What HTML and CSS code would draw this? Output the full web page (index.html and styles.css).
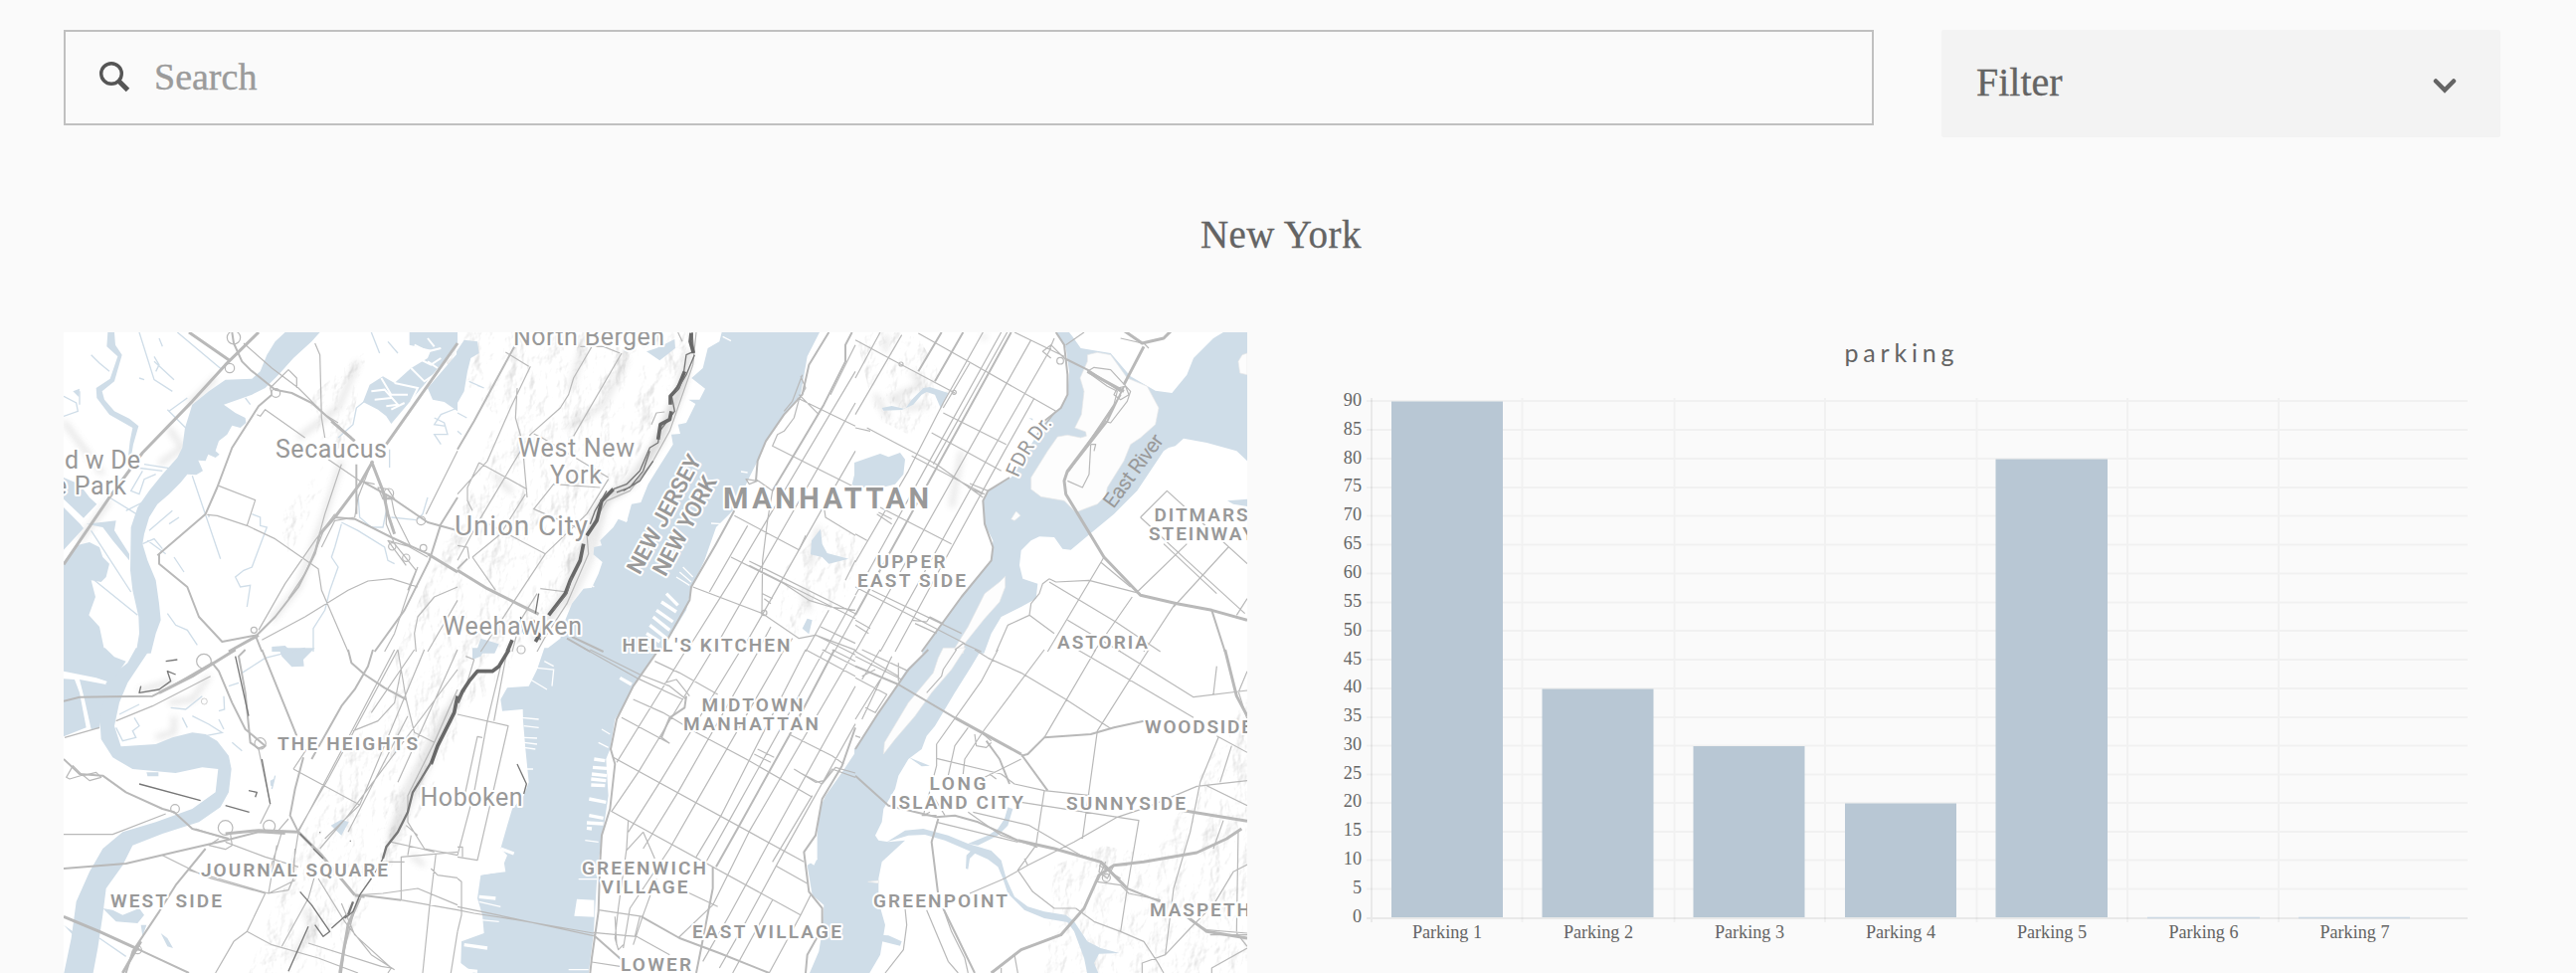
FILE: index.html
```html
<!DOCTYPE html>
<html lang="en">
<head>
<meta charset="utf-8">
<title>New York parking</title>
<link rel="stylesheet" href="styles.css">
</head>
<body>
<header class="toolbar">
  <label class="search">
    <svg class="search-icon" viewBox="0 0 36 36"><circle cx="14" cy="14" r="10.3"/><path class="handle" d="M21.5 21.5L30.5 30.5"/></svg>
    <input class="search-input" type="text" placeholder="Search">
  </label>
  <div class="filter"><span>Filter</span>
    <svg class="chevron" viewBox="0 0 24 16"><path d="M3 3.5L12 12.500L21 3.500"/></svg>
  </div>
</header>
<h1 class="city">New York</h1>
<main class="panels">
<svg class="map" viewBox="64 334 1190 644">
  <defs>
    <filter id="soft" x="-20%" y="-20%" width="140%" height="140%"><feGaussianBlur stdDeviation="9"/></filter>
    <filter id="relief" x="0" y="0" width="100%" height="100%" color-interpolation-filters="sRGB">
      <feTurbulence type="fractalNoise" baseFrequency="0.04 0.025" numOctaves="5" seed="8" result="n"/>
      <feColorMatrix in="n" type="matrix" values="0 0 0 0 0 0 0 0 0 0 0 0 0 0 0 1 0 0 0 0" result="h"/>
      <feDiffuseLighting in="h" surfaceScale="5" diffuseConstant="1.2" lighting-color="#fff" result="l"><feDistantLight azimuth="215" elevation="60"/></feDiffuseLighting>
      <feComposite in="l" in2="SourceAlpha" operator="in"/>
    </filter>
    <path id="fdr" d="M1023.500 480.500Q1036 449 1061 423"/>
  </defs>
  <rect class="land" x="64" y="334" width="1190" height="644"/>

  <g class="relief">
    <path d="M420 334H700L640 460L590 540L540 640L470 720L400 860L330 978H250L300 840L380 700L440 560L500 420Z"/>
    <path d="M310 400L370 350L350 440L280 520L290 560L330 480Z"/>
    <path d="M860 334H920L960 400L920 440L880 420ZM790 570L840 520L870 550L850 600L800 640L780 620Z"/>
    <path d="M1110 850L1160 860L1254 700V978H1050L1060 870Z"/>
  </g>

  <g class="shade" transform="translate(460 330) scale(.33333)">
    <path d="M510 90L440 230L330 300M380 50L340 190M560 430L600 340L690 140M470 500L540 460M110 440L165 495M330 840L400 700L450 520M1040 780L1060 850M1090 600L1060 720"/>
  </g>
  <g class="shade" transform="translate(60 330) scale(.33333)">
    <path d="M900 100L840 240L720 330M850 400L800 560L720 780L640 880M330 300L370 360L300 410M12 280L130 440M470 150L390 230M150 520L60 640"/>
  </g>
  <g class="shade" transform="translate(60 653) scale(.33333)">
    <path d="M450 80L400 150L330 160M345 200V250L290 265M240 125L340 95M740 780L760 840L700 930M1170 180L1040 430L1000 560M1100 650L1060 620"/>
  </g>
  <g class="shade" transform="translate(860 330) scale(.33333)">
    <path d="M95 20L90 70M170 130L200 170L110 210L160 240L220 230M390 20L385 35M320 370L290 540M60 200L100 270"/>
  </g>

  <!-- water -->
  <g class="water" transform="translate(60 330) scale(.33333)">
    <path d="M680 12L785 12L760 40L705 90L660 140L620 180L580 200L495 230L530 255L560 270L562 285L545 300L520 293L505 320L480 340L470 370L482 380L470 390L448 380L440 400L418 398L432 430L412 442L385 440L365 465L330 500L295 530L270 570L255 620L250 650L265 700L290 760L300 830L305 880L290 920L275 980H230L240 920L238 870L220 790L213 730L215 600L235 540L270 490L310 440L355 390L370 360L378 300L400 230L450 190L500 155L580 152L605 130L625 80L650 40Z"/>
    <path d="M12 705L50 655L90 645L120 660L130 690L150 710L140 750L125 765L95 760L108 810L88 865L120 900L137 980H12ZM12 540L62 590L72 603L12 668ZM12 450L60 470L90 510L112 530L72 572L12 515Z"/>
    <path d="M145 12H165L168 50L188 80L165 160L128 190L135 215L165 250L210 272L238 295L222 350L216 385H207L212 340L220 300L150 260L112 210L110 180L152 152L175 85L142 55ZM40 190L60 182L58 208Z"/>
    <path d="M1055 12H1200V50L1000 288L985 265L960 245L915 222L935 170L975 145L1010 165L1060 120L1110 90L1120 65L1055 50Z"/>
    <path d="M1200 75L1110 180L1125 215L1160 222L1200 250ZM640 960L680 957L700 975H640ZM80 590L170 580L165 610L210 680V700L160 640L130 600Z"/>
    <g class="line">
      <path d="M150 130L120 105L95 80M240 12L285 155L340 190M285 100L345 155M300 30L310 55M285 85L300 110L290 130M355 12L490 125M330 250L385 210M325 245L380 300M150 510L240 565M230 420L310 430M255 410L350 425M250 430L215 490L240 500L255 455L290 440M400 445L485 695M450 560L450 570M580 560L605 570V595L625 600L580 720L555 730L530 750L545 780L575 775L565 840M265 640L320 680M345 690L375 735M95 610L215 795M105 760L235 865M325 860L350 895L385 910L415 955M850 590L830 660L820 690L840 720L815 790L800 850L765 905V975M850 585L900 610L980 660L990 700L1010 710M900 500L905 570L940 600L975 600L985 550M1000 570L1075 578M1130 270L1160 285L1170 320L1130 320L1150 350M1200 240L1150 260L1130 290L1165 295M12 205L50 225L55 250L12 265M940 12L965 75M990 40L1020 75M240 150L255 155M60 190V230M560 210L575 230M250 650L285 635L310 665M1110 510L1095 560L1080 575M330 590L360 570M270 610L340 550M920 220L895 240L885 290L840 330M995 365V420M200 550L260 520"/>
    </g>
  </g>
  <g class="pond-lines" transform="translate(60 330) scale(.33333)">
    <path d="M940 190L980 185L1020 230L985 235M970 150L1000 200L1050 200M1010 165L1080 180L1060 220M1060 120L1100 160L1130 140M1080 90L1120 110L1150 90M1000 245L1040 225M1070 50L1110 70L1150 60M1110 100L1140 120M950 215L1000 210M1110 30L1130 55"/>
  </g>
  <g class="water" transform="translate(460 330) scale(.33333)">
    <path d="M797 12H1092L1055 85L1035 200L985 260L930 340L905 400L880 450L835 545L780 600L745 700L705 785L690 850L635 940L610 980H262L275 962L310 935L325 880L345 830L380 785L405 782L425 740L437 705L410 682L412 660L435 655L430 640L470 600L485 575L510 585L525 530L553 525L575 470L600 430L650 350L645 320L672 318L665 290L690 285L718 228L697 215L730 215L747 182L706 150L740 120L755 60L790 40Z"/>
    <path d="M-3 70L20 35L60 40L65 75L40 90L30 130L20 190L-3 230ZM570 70L600 60L655 33L657 60L610 97ZM70 935L125 952L112 980H55ZM1068 640L1095 605L1100 650L1115 678L1180 695L1120 710L1100 690L1065 682ZM1055 875L1070 880L1060 922L1040 905ZM1190 470L1200 430V480Z"/>
    <path d="M35 160L80 180L60 172M0 255L28 270M0 310L12 320" class="line"/>
  </g>
  <g class="water" transform="translate(860 330) scale(.33333)">
    <path d="M605 12L635 60L645 130L640 200L620 240L570 285L470 450L400 490L385 520L390 590L415 640L410 700L320 810L240 920L200 980H388L410 920L440 870L470 855L500 840L545 815L550 770L505 755L495 715L500 670L530 640L555 628L600 630L625 665L650 668L720 610L780 560L850 490L930 370L945 360L965 355L990 332L1060 345L1150 370L1182 400V12H1110L1080 30L1020 90L1000 140L955 195L905 188L830 145L770 75L680 60L655 25L645 12Z"/>
    <path d="M-3 405L40 390L75 378L100 388L135 375L150 395L145 440L120 470L80 480H-3ZM80 240L110 234L150 243L170 215L205 180L225 177L280 195L258 242L240 200L215 192L200 200L175 230L140 246L85 248ZM1122 520L1182 515V537L1140 530ZM523 270L535 272V278Z"/>
  </g>
  <g class="water" transform="translate(60 653) scale(.33333)">
    <path d="M230 -5H275L205 100L180 160L165 230L185 292L290 285L340 265L400 250L440 255L475 275L510 320L518 360L510 430L485 475L420 520L310 555L220 590L190 650L140 720L130 800L115 900L100 980H12L35 870L50 760L90 670L130 600L190 550L290 520L400 480L470 430L478 360L430 355L350 372L220 360L160 325L125 270L120 190L140 100L180 60L205 40Z"/>
    <path d="M12 -5H137L165 22L200 35L155 100L110 85L12 65ZM12 88L45 90L60 130L80 235L12 262ZM60 90L140 105L120 238L95 240L75 150ZM660 -5H770L735 30L737 50L700 52L670 20ZM818 530L850 512L872 520L850 560ZM262 370H298V382H265ZM635 395L645 390V412L636 410ZM130 780L160 785L190 800L240 780L255 800L235 825L170 820L150 800ZM245 830H262L250 865ZM305 855L325 870L342 900L325 895ZM12 830L40 850V860Z"/>
    <path class="line" d="M170 235L190 275L230 265L220 245L240 230L225 205M335 175L380 180L430 140M370 205L385 235M400 200L450 225L490 250L440 260M480 210L495 240M480 185L497 180L495 140M510 110L540 100M550 70L620 25L740 -5M520 280L550 305M180 195L240 165M120 870L200 925M650 380L640 420"/>
  </g>
  <g class="water" transform="translate(460 653) scale(.33333)">
    <path d="M610 -5L590 20L530 110L500 170L475 210L460 300L448 330L455 440L440 540L425 640L420 700L410 860L395 980H55L10 945L12 880L80 855L75 800L60 750L70 680L130 670L150 620L130 600L150 530L165 480L200 440L215 400L205 300L200 240L195 180L135 185L130 150L150 115L215 110L240 60L262 -5Z"/>
    <path d="M1203 305L1160 370L1110 440L1092 480L1085 560L1085 630L1055 650L1070 740L1105 770L1100 850L1090 910L1060 980H1203ZM45 -5H85L70 20L45 30Z"/>
  </g>
  <g class="water" transform="translate(860 653) scale(.33333)">
    <path d="M225 -5L155 60L70 190L-3 300V980H40L75 920L90 830L70 760V690L80 640L150 575L100 580L70 575L60 560L80 520L85 480L120 420L130 380L160 330L200 300L215 260L240 230L300 130L350 50L383 -5Z"/>
    <path d="M95 580L150 545L205 540L280 560L340 585L410 606L440 635L455 690L480 745L520 775L570 790L635 800L660 820L700 880L740 900L797 915L735 917L720 945L735 980H700L690 930L660 850L640 822L570 810L510 785L460 735L445 690L430 655L400 632L340 605L270 575L210 558L160 560ZM340 585L400 560L430 540L450 510L460 475L475 480L460 530L430 560L370 590ZM162 325L225 350L200 352ZM333 660L335 620L355 600L370 605L345 630L340 662ZM75 860L100 862L140 880L135 893L75 878Z"/>
  </g>

  <!-- islands and piers -->
  <g class="land-shape" transform="translate(860 330) scale(.33333)">
    <path d="M700 80L730 73L770 80L820 150L880 175L915 240L905 290L860 330L830 350L810 400L760 480L755 505L730 530L690 545L665 555L630 520L560 508L530 485L530 450L580 370L610 327L640 322L680 330L697 325L695 312L662 300L682 260L690 190L678 150L700 100Z"/>
    <path d="M452 748V780L435 825L390 875L330 950L325 980H290L340 900L390 800L435 765ZM470 575L485 552L498 565L480 580ZM1182 75L1167 80L1155 100L1160 135L1182 140Z"/>
  </g>
  <g class="land-shape" transform="translate(860 653) scale(.33333)"><path d="M265 -5H332L290 60L230 130L180 200L120 270L85 315L88 280L160 160L235 70L250 25ZM38 700L70 696V704Z"/></g>
  <g class="piers" transform="translate(460 330) scale(.33333)">
    <path class="wide" d="M630 800L665 835M615 825L660 855M600 850L650 885M590 870L640 910M580 895L630 935M570 920L610 945M560 945L600 965"/>
    <path d="M680 720L710 750M670 735L705 765M660 750L700 775M765 588L800 590M855 432L875 435M800 25L825 38M490 565L512 580M405 775L412 780"/>
  </g>
  <g class="piers" transform="translate(460 653) scale(.33333)">
    <path class="wide" d="M490 85L525 105M412 330L445 335M408 355L450 358M405 375L450 380M403 390L448 395M403 408L445 410M397 450L448 460M397 500L440 508M390 522L440 525M390 538L405 540M130 600L170 615M65 745L115 750M20 890L90 900M10 965L60 970"/>
    <path d="M425 280L455 295M435 240L460 255M365 692H420M335 965H395M195 180V205L245 210M200 230L245 235M200 265L240 267M200 280L240 285M200 295L235 300M210 360H228M65 760L130 775M70 815L125 820M1055 630L1085 632M385 575L425 580M240 55L290 60L285 110M220 90L270 120M262 35L290 50"/>
    <path class="block" d="M360 752L412 755V806L352 803ZM60 655L140 640L145 670L60 680ZM1055 625L1085 630L1075 650L1060 640Z"/>
  </g>

  <!-- roads: New Jersey north -->
  <g class="roads" transform="translate(60 330) scale(.33333)">
    <path class="major" d="M12 712L150 510L250 375L400 220L500 110L600 12M390 12L510 95M820 280L890 340M945 400L905 470L830 570L785 620M940 400L975 490L990 560L1010 620M1110 680L1200 735M1200 45L985 350M600 925L510 975"/>
    <path class="mid" d="M520 12L525 45L550 100L575 125L650 185L700 195L760 225L800 260L880 330M640 200L600 235L520 360L475 480L440 560L295 685M785 620L770 680L720 780L650 870L595 925L490 945L420 870L385 780L300 710V680M895 410V560M910 460L1000 510L1110 585L1200 610M830 570L890 575L1000 630L1110 680M1200 510L1150 590L1115 700L1040 850L950 975M590 925L610 975"/>
    <path d="M555 45L640 120L720 180L800 260L840 285M770 45L785 80L790 270L800 330M595 260L605 265L620 245L740 330M810 395L905 460L950 470M480 475L590 518L565 595L475 565L445 562M565 595L650 635L780 725L790 790L870 975M600 910L680 770L770 640L830 560M610 940L740 870L870 790L930 762L1000 755L1080 780M1200 370L1105 560M850 410L800 560L770 670L740 740L690 815M640 200L635 180L690 125L715 150V180M1080 720L1050 800L1010 920L980 975M1200 780L1130 810L1080 870L1070 920L1075 975M1200 820L1110 975M935 420L900 510L890 570L830 580L790 660M985 500V590L1010 650L1075 730L1050 790M1000 510L1010 560L1060 660L990 640L1045 715M800 600L760 700M1020 640L1110 690M960 480L990 485L1010 515L975 515Z"/>
    <circle cx="513" cy="120" r="14"/><circle cx="525" cy="28" r="20"/><circle cx="652" cy="195" r="13"/><circle cx="586" cy="910" r="9"/><circle cx="1090" cy="580" r="13"/><circle cx="1003" cy="658" r="11"/><circle cx="1045" cy="692" r="11"/><circle cx="1097" cy="662" r="10"/><circle cx="993" cy="497" r="14"/>
  </g>
  <g class="roads" transform="translate(460 330) scale(.33333)">
    <path class="major" d="M0 730L90 785L190 835L245 862"/>
    <path class="mid" d="M195 12L120 150L50 280L0 365M0 725L30 695M1120 12L1060 110L1040 200L985 260L930 340L905 400L900 460M835 550L780 650L705 780L700 820L635 935L610 975M345 930L440 975M330 935L400 975M1190 12L1170 50V100L1105 230L1040 340L950 490"/>
    <path d="M145 72L215 115M490 75L440 55L370 55M405 55L350 150L335 200L310 240L220 320L65 580L0 700M495 75L350 325M230 318L255 330L455 450M65 405L210 485M65 405L30 480L30 520L45 550M220 115L160 240L90 400L0 500M455 455L390 560L265 680L70 975M430 480L290 470L230 545L380 610M205 500L130 620L45 690M180 180L175 270L195 340L210 510M265 680L95 590M45 690L115 790M0 655L30 660L35 695M665 12L678 40M720 12L710 110L640 310L590 400L520 490L450 520L390 620L395 680L330 830L265 930L240 975M585 290L600 255L625 252M240 800L190 880L165 975M250 785L330 795M1025 210L1200 295M1030 200L1090 260M1035 145L1050 180L1030 215L1015 270L985 310L965 320L950 355L1090 425L1200 480M985 250L1010 220L1040 140M835 565L1030 668L1050 625M825 690L985 770L1060 820L1125 840L1200 850M880 702L1200 860M880 715L1200 875M710 780L920 860L1030 935L1080 925L1200 970M900 455L950 490L935 580L920 700L918 860M1105 535L1110 570L1200 625M920 800L950 815M925 815L945 830M1095 900L1200 950M1080 925L1200 985M870 455L905 460L880 470Z"/>
    <circle cx="925" cy="858" r="8"/>
  </g>

  <!-- Manhattan street grid -->
  <g class="roads" transform="translate(460 330) scale(.33333)">
    <path d="M1200 130L950 550L825 760L690 975M875 595L760 795M1200 225L985 600L770 975M1200 370L1105 535L910 880L855 975M945 900L905 975M1010 935L985 975M1200 700L1170 760M1120 850L1050 975M1200 808L1107 975M1200 862L1137 975M1200 50L1125 200"/>
  </g>
  <g class="roads" transform="translate(460 653) scale(.33333)">
    <path class="mid" d="M610 -5L530 110L480 210L462 300L475 345L460 480L435 560L430 640L425 790L405 930L400 975M1137 0L1000 260L850 530L780 655M770 655V720L735 900L720 975M1200 235L1160 350L1100 450L1080 560L1045 610L1060 730L1100 780L1100 840L1055 920L1050 975M555 805L670 870L790 915L940 975M410 860L495 935M690 140L685 175L640 205L615 265"/>
    <path d="M690 0L480 340M770 0L545 370L465 487M855 0L610 400L515 550M910 0L665 430L560 600M985 0L720 460L640 600L520 780L500 900M1050 0L795 500L720 625M600 690L560 800L530 890M1107 0L820 515L750 640M1200 0L880 548L770 770L665 870M1200 110L940 580L820 800L740 940M1200 224L985 608L870 820L790 960M560 550L510 605M1070 440L950 640M950 755L830 975M595 35L670 70L785 135M530 150L620 190L720 250L880 335L1070 445M495 205L640 283M470 325L1045 640M463 487L1035 800M690 730L785 775M960 652L1055 705M425 785L560 805M410 853L540 865L640 920M405 942L490 955M1000 255L1130 320L1165 345M905 300L955 325M895 315L945 340M1015 360L1080 400L1105 395L1130 360L1200 385M1030 370L1100 405L1140 355L1200 372M1035 800L1065 740M550 805L535 865M560 550L595 630M515 515L510 600L485 780L475 870L485 905L500 890M475 805L480 890M640 283L610 260M625 100L660 90L700 140M400 0L550 75L640 110L690 150M380 -5L540 85L680 150M1050 0L1200 80M1100 0L1200 50M1130 0L1200 35M0 785L50 795L180 815L410 855M0 775L120 800L410 863M940 975L1035 800"/>
  </g>
  <g class="roads" transform="translate(860 330) scale(.33333)">
    <path class="mid" d="M260 12L190 130M325 12L240 160M470 12L0 865M605 12L630 50L640 140V200L620 240L570 280M465 450L400 490L385 520L390 590L415 660L410 700L320 810L200 975M630 90L700 125L800 190"/>
    <path d="M0 35L130 105L300 195M190 15L350 105L605 250M385 12L265 225L160 430L0 705M458 12L235 410M440 12L210 425L0 805M530 35L0 975M590 60L400 390L75 975M540 210L450 370L280 680L120 975M605 250L540 330M345 105L265 240M265 255L455 350M230 315L440 430M35 300L130 350L245 410L385 510M170 385L390 500M345 468L400 490M340 480L385 500M0 300L45 310M65 560L110 590M0 620L35 640M75 540L290 650M0 780L330 950M50 790L320 920M170 880L215 885L225 870L265 890M180 890L245 920M300 970L325 950L380 975M0 880L45 905M0 895L40 920M480 12L630 85M590 90L565 70L590 50L630 90M635 50L690 12M600 30L585 65M70 555L110 575M140 20L0 260M75 12L0 150"/>
    <circle cx="298" cy="193" r="6"/><circle cx="138" cy="108" r="6"/><circle cx="618" cy="98" r="10"/>
    <path class="major" d="M800 0L865 45L930 30L960 0M870 55L810 170M750 285L640 430L630 460L635 500L750 690L860 805L970 830L1075 850L1182 880M700 130L810 190"/>
    <path class="mid" d="M810 175L760 280L635 440M800 200L745 290M1075 850L1115 975"/>
    <path d="M700 130L720 118L770 125L830 190L820 220L770 285L750 280M705 135L760 175L790 190L780 230L645 430M710 350L705 440L685 480L640 460M710 350L725 350L720 370M790 180L815 175L825 200L800 215L780 200ZM865 45L800 30M885 60L870 45M750 690L580 975M585 755L605 765L705 760L860 800M585 755L565 770L555 800L530 830L525 865L600 920M525 865L460 895L425 975M585 765L785 885L920 975M740 705L830 780M850 795L1000 650M860 570L940 490L1182 710M860 570L1000 700L1175 860M835 810L720 975M965 830L870 975M1125 660L960 840M640 880L800 975M930 650L1090 800M1182 815L1150 865"/>
  </g>

  <!-- Queens and Brooklyn -->
  <g class="roads" transform="translate(860 653) scale(.33333)">
    <path class="major" d="M300 205L500 315M990 485L1182 517M490 575L600 600L740 640L800 700L820 720M1165 540L1120 570L1030 612L870 640L780 650L735 680L690 780L620 860L500 905L410 975M1000 805L1060 850L1182 870M1182 200L1150 140L1115 0"/>
    <path class="mid" d="M0 50L130 105L300 205M0 300L70 190L160 60L220 0M0 380L100 470L245 505L300 500L370 520L490 575M250 510L230 580L250 740M265 780L360 975M500 315L580 425M820 720L920 760M500 320L520 315L570 265L710 255L780 235L870 215M395 275L435 330L465 405"/>
    <path d="M360 0L400 25L500 70L635 150L770 238M670 0L800 75L1020 205M790 0L1020 143L1182 123M570 0L390 240L330 330L325 375M725 0L570 265M885 0L730 245L685 570M430 0L380 95L245 285V350L205 500M340 235L300 290L280 380M245 328L440 375L480 405L570 425L710 440M390 385L500 330M500 460L855 515L820 720L800 850M570 425L545 590L490 665L535 730L600 780L665 780M345 735L450 690L520 650L660 580L790 505L880 475L1030 412L1182 395M355 490L525 530L680 620L745 640M245 520L490 580M340 490L440 560L550 595M110 20L20 210M1095 265L1040 400L1010 550L960 720L935 920L865 945L865 975M935 920L1010 840L1080 770L1140 670L1182 648M1090 260L1182 310M1135 290L1100 400M1110 515L1080 600M1155 545L1150 850M1060 410L1182 470M480 920L490 975M150 780L155 830L145 905L90 975M215 785L280 940L310 975M730 700L800 710L825 735L920 755M740 640L735 670L760 690L780 650M665 780L720 820L800 850L870 880L910 940L930 975M265 780L290 850L330 930L340 975M1182 855L1060 845L1010 815M1182 860L1070 860M1182 900L1075 960V975M1150 855L1182 895M1090 50L1080 135M1155 125L1182 210M1182 65L1155 130M360 255L365 290L395 295L410 280M380 250L410 275M405 375L425 390M245 500L200 500M270 500L240 450M225 490L205 500M0 20L140 90M20 0L160 65M0 85L95 135L60 190L30 175M0 5L130 80M75 0L20 90M60 60L20 80M130 40V95M105 30L90 65M0 210L75 90M0 260L15 265M215 130L260 80L265 60L305 0M510 630L520 650M440 960V975"/>
    <path d="M745 640L815 715M735 650L800 690M755 640L730 700M780 650L820 650"/><circle cx="757" cy="688" r="12"/>
  </g>

  <!-- New Jersey south -->
  <g class="roads" transform="translate(60 653) scale(.33333)">
    <path class="major" d="M300 130L400 80L530 0M500 555L600 545L720 550L790 620L890 740M890 740L920 745M905 750L870 830L845 975M245 880L190 975M12 805L120 850L240 905"/>
    <path class="mid" d="M12 155L60 143L150 142L280 140L340 110L460 40L480 65L520 160L560 240L620 290L600 298L575 280L560 130L540 20L560 0M12 330L60 375L130 380L200 430L310 480L345 490L400 540L510 570M12 660L200 645L350 610L500 575L600 550L680 555M440 600L350 710L300 790L220 910L200 975M610 0L715 260M735 325L710 420L695 500L720 550M945 0L930 50L890 120L850 170L760 330M870 0L880 40L920 75L980 115L1045 150M910 740L1030 755M240 905L390 975"/>
    <path d="M15 265L120 235M170 215L280 170L455 80M705 360L905 468M705 360L745 300M720 550L905 200L1010 0M720 545L810 390L1020 0M800 570L905 468L1100 0M870 550L1050 200M1070 0L940 190M785 600L870 500L1200 60M1020 0L1045 150L1070 250L1130 280M1200 0L1020 400M1200 120L1130 280L1050 440L1050 520L1100 600L1200 620M885 245L960 215L1010 160L1030 60M12 557H160L320 495M500 580L620 625L720 655M390 665L630 735L710 695M310 620L440 685L620 735L565 850L525 880L470 975M565 850L640 890L780 930L900 975M670 895L750 750L770 680M655 590L630 735L690 725L705 690L710 600M670 550L655 600L635 660M900 740L975 735L1080 720L1200 770M1030 755V625L1200 610M1030 755L1200 785M1135 615L1115 780L1095 975M850 765L890 860L1000 960L990 975M780 690L860 820L940 920L1010 965M750 885L970 955L1000 960M1200 850L1180 975M910 745L890 780L860 900L850 975M720 550L700 680M600 300L635 465L605 525M1000 580L1090 600L1130 610M1045 530L1080 560M1060 560L1050 620M1120 660L1140 680L1200 688M690 510L660 545M970 640L1040 640M410 540L500 570"/>
    <circle cx="435" cy="35" r="22"/><circle cx="500" cy="537" r="22"/><circle cx="348" cy="480" r="13"/><circle cx="632" cy="532" r="18"/><circle cx="605" cy="283" r="17"/><circle cx="235" cy="905" r="12"/><path d="M20 385L40 350L70 380L110 370L125 385L90 395L70 378L30 390ZM515 555L520 590L500 602L450 590L480 570"/>
  </g>
  <g class="roads" transform="translate(460 653) scale(.33333)">
    <path d="M150 0L110 215M130 50L90 215M0 195L153 230L60 635L0 625M75 265L60 262L15 470M90 215L50 430L0 620M0 690L12 700V800L0 850M0 595H15V625M25 20L50 30L20 130"/><circle cx="192" cy="0" r="12"/>
  </g>

  <!-- cliffs -->
  <g class="cliff" transform="translate(460 330) scale(.33333)">
    <path class="haze" d="M700 70L670 190L610 340L510 475L430 530L375 680L320 810L230 940"/>
    <path class="fine" d="M708 12L712 70L690 80L680 150L645 200L655 250L610 310L605 345L580 360L550 430L510 470L470 485"/>
    <path d="M705 14L702 40L712 75M685 130L665 180L642 205V230M645 250L640 275L612 290L605 335M470 485L435 520L420 580L390 625M380 650L370 700L340 760L325 800L275 865M250 920L235 945M165 940L150 975" class="bold"/>
    <path class="fine" d="M580 370L560 430L520 480L480 495M345 750L330 800L290 850M245 800L235 860M660 190L690 140L715 80M590 400L550 460L500 490M450 490L415 550L400 590M190 870L200 920L230 880L250 940"/>
  </g>
  <g class="cliff" transform="translate(460 653) scale(.33333)"><path class="bold" d="M155 0L125 50L105 65L60 65L35 95L15 125L0 160"/><path class="fine" d="M180 345L208 405L200 435"/></g>
  <g class="cliff" transform="translate(60 653) scale(.33333)">
    <path class="haze" d="M1200 140L1080 400L1000 580"/>
    <path class="bold" d="M1200 140L1190 190L1160 250L1140 290L1120 345"/>
    <path class="medium" d="M1120 340L1090 390L1065 430L1050 490L1020 550L985 595L975 630M885 760L870 800"/>
    <path class="fine" d="M975 630L940 690L905 740L885 790L860 810M725 730L760 770L815 850L795 865L770 830M865 800L820 840M750 835L690 970M530 20L570 200M610 330L635 465M500 470L572 490M240 405L425 455M320 35L355 30M245 110L240 130L300 120L335 95L325 65L350 75M570 425L595 430L590 445M725 555L760 590M765 600L795 630M785 550V553M877 575V578"/>
    <circle cx="436" cy="156" r="9"/>
  </g>

  <!-- labels -->
  <g class="town">
    <text x="65" y="471" textLength="76">d w De</text><text x="54" y="496.700" textLength="73">e Park</text>
    <text x="277" y="460" textLength="112">Secaucus</text><text x="516" y="346.700" textLength="152">North Bergen</text>
    <text x="521" y="459.300" textLength="117">West New</text><text x="553" y="485.700" textLength="52">York</text>
    <text class="bigger" x="457" y="538.300" textLength="134">Union City</text><text x="445" y="637.700" textLength="140">Weehawken</text>
    <text x="422.500" y="809.700" textLength="103">Hoboken</text>
    <text class="river" transform="translate(1119.500 512) rotate(-53.500)" textLength="86">East River</text>
    <text class="street"><textPath href="#fdr">FDR Dr.</textPath></text>
  </g>
  <g class="area">
    <text class="state" transform="translate(643 578.500) rotate(-61.600)" textLength="132">NEW JERSEY</text>
    <text class="state" transform="translate(669 580.500) rotate(-61.600)" textLength="110">NEW YORK</text>
    <text class="borough" x="727" y="511" textLength="207">MANHATTAN</text>
    <text x="625.500" y="655" textLength="169">HELL'S KITCHEN</text>
    <text x="881.500" y="570.700" textLength="69">UPPER</text><text x="862" y="590" textLength="109">EAST SIDE</text>
    <text x="1160.500" y="524" textLength="94">DITMARS</text><text x="1155" y="543.300" textLength="106">STEINWAY</text>
    <text x="1063" y="651.700" textLength="91">ASTORIA</text><text x="279" y="754" textLength="141">THE HEIGHTS</text>
    <text x="202" y="881" textLength="188">JOURNAL SQUARE</text><text x="111" y="912" textLength="112">WEST SIDE</text>
    <text x="705.500" y="715.300" textLength="102">MIDTOWN</text><text x="687" y="734" textLength="136">MANHATTAN</text>
    <text x="585" y="879" textLength="125">GREENWICH</text><text x="604.500" y="898" textLength="87">VILLAGE</text>
    <text x="696" y="942.700" textLength="150">EAST VILLAGE</text><text x="624" y="976.300" textLength="71">LOWER</text>
    <text x="934.500" y="794.300" textLength="57">LONG</text><text x="896" y="813.300" textLength="133">ISLAND CITY</text>
    <text x="1072" y="814.300" textLength="120">SUNNYSIDE</text><text x="1151" y="736.700" textLength="108">WOODSIDE</text>
    <text x="878" y="912" textLength="135">GREENPOINT</text><text x="1156" y="921" textLength="101">MASPETH</text>
  </g>
</svg>

<svg class="chart" viewBox="1320 334 1200 644">
  <text class="chart-title" x="1854.500" y="363.500" textLength="110">parking</text>
  <path class="grid" d="M1374 403H2481M1374 432H2481M1374 461H2481M1374 490H2481M1374 518.500H2481M1374 547.500H2481M1374 576.500H2481M1374 605.500H2481M1374 634H2481M1374 663H2481M1374 692H2481M1374 721H2481M1374 749.500H2481M1374 778.500H2481M1374 807H2481M1374 836H2481M1374 864.500H2481M1374 893.500H2481M1530.500 400V927M1683.500 400V927M1835 400V927M1987.500 400V927M2139 400V927M2291 400V927"/>
  <path class="axis" d="M1374 923H2481M1379 400V927"/>
  <g class="bars">
    <rect x="1399" y="403.500" width="112" height="518.500"/><rect x="1550.500" y="692.500" width="112" height="229.500"/>
    <rect x="1702.500" y="750" width="112" height="172"/><rect x="1855" y="807.500" width="112" height="114.500"/>
    <rect x="2006.500" y="461.500" width="112.500" height="460.500"/>
  </g>
  <path class="empty-bar" d="M2159 922.500H2272M2311 922.500H2423"/>
  <g class="y-labels">
    <text x="1369" y="407.700">90</text><text x="1369" y="436.600">85</text><text x="1369" y="465.500">80</text><text x="1369" y="494.400">75</text><text x="1369" y="523.300">70</text><text x="1369" y="552">65</text><text x="1369" y="581">60</text><text x="1369" y="610">55</text><text x="1369" y="638.800">50</text><text x="1369" y="667.700">45</text><text x="1369" y="695.500">40</text><text x="1369" y="724.500">35</text><text x="1369" y="753.500">30</text><text x="1369" y="782.500">25</text><text x="1369" y="811">20</text><text x="1369" y="840">15</text><text x="1369" y="869">10</text><text x="1369" y="897.700">5</text><text x="1369" y="926.700">0</text>
  </g>
  <g class="x-labels">
    <text x="1455" y="943.300">Parking 1</text><text x="1607" y="943.300">Parking 2</text><text x="1759" y="943.300">Parking 3</text><text x="1911" y="943.300">Parking 4</text><text x="2063" y="943.300">Parking 5</text><text x="2215.500" y="943.300">Parking 6</text><text x="2367.500" y="943.300">Parking 7</text>
  </g>
</svg>
</main>
</body>
</html>
```
FILE: styles.css
```css
* { box-sizing: border-box; }
html, body { height: 978px; overflow: hidden; }
body { margin: 0; background: #fafafa; color: #646464; font-family: "Liberation Serif", "Times New Roman", serif; }

.toolbar { display: flex; align-items: flex-start; gap: 68px; padding: 30px 76px 0 64px; height: 138px; }
.search { display: flex; align-items: center; width: 1820px; height: 96px; border: 2px solid #c0c0c0; padding-left: 32px; }
.search-icon { width: 36px; height: 36px; fill: none; stroke: #555; stroke-width: 3.4; }
.search-icon .handle { stroke-width: 5; }
.search-input { flex: 1; margin: 0 0 2px 21px; padding: 0; border: 0; outline: 0; background: none; font: 38px "Liberation Serif", serif; }
.search-input::placeholder { color: #9b9b9b; opacity: 1; -webkit-text-stroke: .4px #9b9b9b; }
.filter { display: flex; align-items: center; justify-content: space-between; width: 562px; height: 108px; padding: 0 44px 0 35px; background: #f3f3f3; border-radius: 2px; font-size: 40px; -webkit-text-stroke: .3px #646464; }
.filter span { padding-bottom: 3px; }
.chevron { width: 24px; height: 16px; margin-top: 3px; fill: none; stroke: #646464; stroke-width: 4.500; stroke-linecap: round; }

.city { margin: 0; padding-top: 74px; height: 196px; width: 2576px; text-align: center; font-weight: 400; font-size: 39px; letter-spacing: .5px; line-height: 48px; -webkit-text-stroke: .3px #646464; }

.panels { display: flex; gap: 66px; padding-left: 64px; }
.map { flex: none; width: 1190px; height: 644px; }
.chart { flex: none; width: 1200px; height: 644px; }

.land { fill: #fff; }
.land-shape { fill: #fdfdfd; stroke: #e8e8e8; stroke-width: 2; }
.relief { fill: #000; filter: url(#relief); opacity: .25; }
.shade { fill: none; stroke: #777; stroke-width: 16; opacity: .18; filter: url(#soft); }
.water { fill: #cfdde8; }
.water .line { fill: none; stroke: #cfdde8; stroke-width: 4; }
.pond-lines { fill: none; stroke: #fff; stroke-width: 6; }
.piers { fill: none; stroke: #fff; stroke-width: 4; }
.piers .wide { stroke-width: 10; }
.piers .block { fill: #fff; stroke: none; }
.roads { fill: none; stroke: #b9b9b9; stroke-width: 3.600; stroke-linejoin: round; }
.roads .mid { stroke-width: 6; }
.roads .major { stroke-width: 9; }
.cliff { fill: none; stroke: #777; stroke-linejoin: round; }
.cliff .fine { stroke-width: 4; }
.cliff .medium { stroke-width: 7; }
.cliff .bold { stroke: #686868; stroke-width: 11; }
.cliff .haze { stroke: #aaa; stroke-width: 26; opacity: .3; filter: url(#soft); }

.town, .area { font-family: Roboto, sans-serif; fill: #999; stroke: #fff; stroke-width: 4; stroke-linejoin: round; paint-order: stroke; }
.town { font-size: 25px; }
.town .bigger { font-size: 28px; }
.town .river { font-size: 21px; stroke: none; }
.town .street { font-size: 20px; }
.area { font-size: 19px; font-weight: 600; }
.area .state { font-size: 22.500px; }
.area .borough { font-size: 29px; font-weight: 700; }

.chart text { fill: #646464; font-size: 18.200px; }
.chart .chart-title { font-family: Lato, sans-serif; font-size: 25px; }
.grid { stroke: rgba(0, 0, 0, .035); stroke-width: 2; }
.axis { stroke: rgba(0, 0, 0, .065); stroke-width: 2; fill: none; }
.bars { fill: #b8c7d4; }
.empty-bar { stroke: #ccd8e4; stroke-width: 1.500; }
.y-labels { text-anchor: end; }
.x-labels { text-anchor: middle; }
```
